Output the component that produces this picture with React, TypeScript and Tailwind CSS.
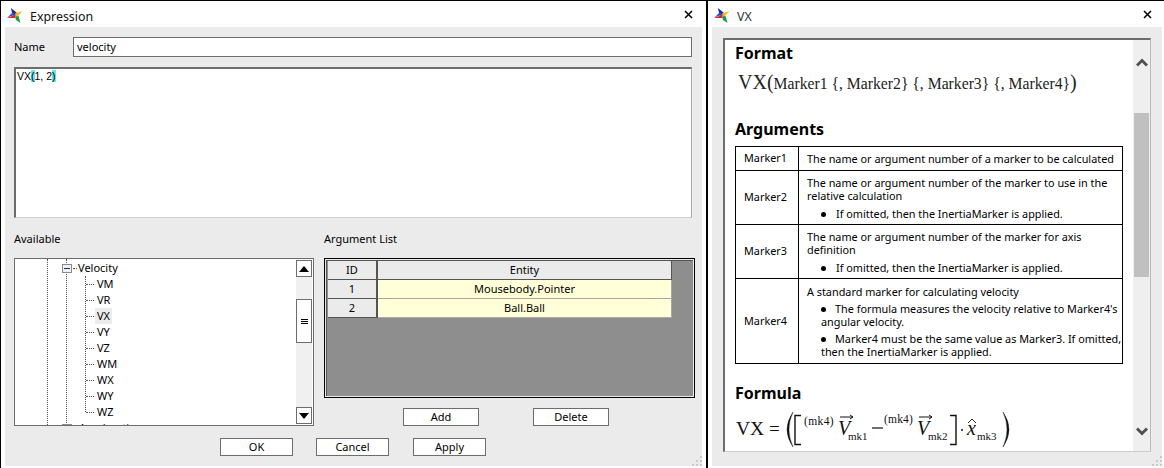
import React from "react";

const ui = "font-['Noto_Sans',sans-serif] text-[11px] text-black";

function Logo() {
  return (
    <svg width="16" height="16" viewBox="0 0 16 16" className="shrink-0 mt-[3px]">
      <polygon points="4,0 10,5 7,8 5,5" fill="#1a2590" />
      <polygon points="0,10 6,4 9,7 4,8" fill="#1f4fd0" />
      <polygon points="0,10 9,6.5 8,10" fill="#e0202a" />
      <polygon points="15.5,3 8,5.5 9.5,9.5" fill="#f5b81e" />
      <polygon points="8,8.5 11.5,8 13.5,15 9,12" fill="#1f9a3c" />
    </svg>
  );
}

function Close() {
  return (
    <svg width="9" height="9" viewBox="0 0 9 9" className="shrink-0">
      <path d="M1 1 L8 8 M8 1 L1 8" stroke="#000" strokeWidth="1.5" />
    </svg>
  );
}

function Grip() {
  return (
    <svg width="12" height="12" viewBox="0 0 12 12" className="absolute right-0 bottom-0">
      <path d="M10 2h2v2h-2zM6 6h2v2H6zM10 6h2v2h-2zM2 10h2v2H2zM6 10h2v2H6zM10 10h2v2h-2z" fill="#c9c9c9" />
    </svg>
  );
}

function Btn({ label, w }: { label: string; w: string }) {
  return (
    <div className={`${w} h-[18px] bg-white border border-[#6d6d6d] flex items-center justify-center`}>{label}</div>
  );
}

function TreeTri({ up }: { up: boolean }) {
  return (
    <svg width="10" height="6" viewBox="0 0 10 6">
      <path d={up ? "M5 0 L10 6 L0 6 Z" : "M0 0 L10 0 L5 6 Z"} fill="#000" />
    </svg>
  );
}

function TitleBar({ title, color, pr }: { title: string; color: string; pr: string }) {
  return (
    <div className={`h-[26px] shrink-0 flex items-center pl-[6px] ${pr}`}>
      <Logo />
      <span className={`ml-[7px] mt-[6px] text-[12.4px] ${color}`}>{title}</span>
      <span className="flex-1" />
      <Close />
    </div>
  );
}

function Tree() {
  const items = ["VM", "VR", "VX", "VY", "VZ", "WM", "WX", "WY", "WZ"];
  return (
    <div className="relative w-[300px] h-[168px] bg-white border border-[#6d6d6d] overflow-hidden">
      <div className="absolute left-[32px] top-0 bottom-0 border-l border-dotted border-[#555]" />
      <div className="absolute left-[51px] top-0 bottom-0 border-l border-dotted border-[#555]" />
      <div className="absolute left-[70px] top-[17px] h-[136px] border-l border-dotted border-[#555]" />
      <div className="pt-px pl-[47px]">
        <div className="h-4 flex items-center">
          <div className="relative z-10 w-[10px] h-[9px] border border-[#8a8a8a] bg-[#f0f0f0] flex items-center justify-center">
            <div className="w-[6px] h-px bg-[#1c2a6c]" />
          </div>
          <div className="w-[4px] ml-px border-t border-dotted border-[#555]" />
          <span className="ml-px">Velocity</span>
        </div>
        {items.map((t) => (
          <div key={t} className="h-4 flex items-center pl-[24px]">
            <div className="w-[8px] border-t border-dotted border-[#555]" />
            <span className={`ml-px px-[2px] leading-4 ${t === "VX" ? "bg-[#ececec]" : ""}`}>{t}</span>
          </div>
        ))}
        <div className="h-4 flex items-center">
          <div className="relative z-10 w-[10px] h-[9px] border border-[#8a8a8a] bg-[#f0f0f0]" />
          <span className="ml-[7px]">Acceleration</span>
        </div>
      </div>
      <div className="absolute right-[1px] top-[1px] bottom-[1px] w-[16px] bg-[#f0f0f0] flex flex-col justify-between">
        <div className="absolute left-0 right-0 top-[39px] h-[44px] bg-white border border-[#6d6d6d] flex flex-col items-center justify-center gap-px">
          <div className="w-[7px] h-px bg-black" />
          <div className="w-[7px] h-px bg-black" />
          <div className="w-[7px] h-px bg-black" />
        </div>
        <div className="h-[17px] bg-white border border-[#6d6d6d] flex items-center justify-center"><TreeTri up /></div>
        <div className="h-[17px] bg-white border border-[#6d6d6d] flex items-center justify-center"><TreeTri up={false} /></div>
      </div>
    </div>
  );
}

function ArgTable() {
  const rows = [["1", "Mousebody.Pointer"], ["2", "Ball.Ball"]];
  return (
    <div className="w-[371px] h-[140px] border border-black bg-[#ebebeb] p-px">
      <div className="w-full h-full bg-[#8e8e8e] border-l border-t border-[#555] pl-px">
        <div className="flex h-[19px] w-[344px]">
          <div className="w-[50px] bg-[#ebebeb] border-r-2 border-b border-[#555] flex items-center justify-center">ID</div>
          <div className="flex-1 bg-[#ebebeb] border-r border-b border-[#555] flex items-center justify-center">Entity</div>
        </div>
        {rows.map(([id, e]) => (
          <div key={id} className="flex h-[19px] w-[344px]">
            <div className="w-[50px] bg-[#ebebeb] border-r-2 border-b border-[#555] flex items-center justify-center">{id}</div>
            <div className="flex-1 bg-[#ffffd8] border-r border-b border-[#a8a8a8] flex items-center justify-center">{e}</div>
          </div>
        ))}
      </div>
    </div>
  );
}

function Expression() {
  return (
    <div className={`w-[706px] shrink-0 flex flex-col border-l border-black ${ui}`}>
      <TitleBar title="Expression" color="text-[#111]" pr="pr-[13px]" />
      <div className="relative ml-[4px] mr-[4px] flex-1 mb-[2px] bg-[#ebebeb] pl-[9px] pt-[10px]">
        <div className="flex items-center h-[20px]">
          <span className="w-[59px]">Name</span>
          <div className="w-[619px] h-[20px] bg-white border border-[#6d6d6d] pl-[3px] flex items-center">velocity</div>
        </div>
        <div className="mt-[10px] w-[678px] h-[151px] bg-white border border-t-2 border-l-2 border-[#6d6d6d] border-r-[#aaa] border-b-[#ccc] pl-px leading-[15px] font-['Liberation_Sans',sans-serif] text-[10.5px]">
          VX<span className="bg-[#5fe8e8]">(</span>1, 2<span className="bg-[#5fe8e8]">)</span>
        </div>
        <div className="mt-[13px] flex">
          <div className="w-[310px]">
            <div className="h-[16px] leading-4 mb-[11px]">Available</div>
            <Tree />
          </div>
          <div>
            <div className="h-[16px] leading-4 mb-[11px]">Argument List</div>
            <ArgTable />
            <div className="mt-[10px] flex pl-[79px] gap-[54px]">
              <Btn label="Add" w="w-[76px]" />
              <Btn label="Delete" w="w-[76px]" />
            </div>
          </div>
        </div>
        <div className="mt-[12px] flex pl-[206px]">
          <Btn label="OK" w="w-[73px]" />
          <div className="w-[23px]" />
          <Btn label="Cancel" w="w-[73px]" />
          <div className="w-[24px]" />
          <Btn label="Apply" w="w-[73px]" />
        </div>
        <Grip />
      </div>
    </div>
  );
}

function Heading({ children, className }: { children: React.ReactNode; className?: string }) {
  return <div className={`font-bold text-[16px] leading-[22px] text-black ${className ?? ""}`}>{children}</div>;
}

function Dot() {
  return <span className="inline-block w-[5px] h-[5px] rounded-full bg-black align-[1px]" />;
}

function Row({ name, h, children }: { name: string; h: string; children: React.ReactNode }) {
  return (
    <div className={`flex ${h} border-b border-black last:border-b-0`}>
      <div className="w-[63px] shrink-0 border-r border-black pl-[8px] flex items-center">{name}</div>
      <div className="flex-1 pl-[8px] pr-[1px] flex flex-col justify-center leading-[13px]">{children}</div>
    </div>
  );
}

function Formula() {
  return (
    <svg width="290" height="42" viewBox="0 0 290 42" className="block font-['Liberation_Serif',serif]">
      <text x="1" y="25" fontSize="19.5" fill="#111">VX</text>
      <text x="34" y="25" fontSize="19" fill="#111">=</text>
      <path d="M58 2 Q46 19.5 58 37 Q50 19.5 58 2" fill="#111" stroke="#111" strokeWidth="0.4" />
      <path d="M66 5.5 H60 V34.5 H66" fill="none" stroke="#111" strokeWidth="1.4" />
      <text x="69" y="15" fontSize="11.5" letterSpacing="0.4" fill="#111">(mk4)</text>
      <text x="103" y="25" fontSize="20" fontStyle="italic" fill="#111">V</text>
      <path d="M105 7 H118 M115 5 L118 7 L115 9" fill="none" stroke="#111" strokeWidth="1" />
      <text x="113" y="30" fontSize="11" fill="#111">mk1</text>
      <path d="M137 18 H148" stroke="#111" strokeWidth="1.2" />
      <text x="149" y="13" fontSize="11.5" letterSpacing="0.2" fill="#111">(mk4)</text>
      <text x="182" y="25" fontSize="20" fontStyle="italic" fill="#111">V</text>
      <path d="M184 7 H197 M194 5 L197 7 L194 9" fill="none" stroke="#111" strokeWidth="1" />
      <text x="193" y="30" fontSize="11" fill="#111">mk2</text>
      <path d="M215 5.5 H221 V34.5 H215" fill="none" stroke="#111" strokeWidth="1.4" />
      <circle cx="227" cy="20" r="1" fill="#111" />
      <text x="232" y="25" fontSize="20" fontStyle="italic" fill="#111">x</text>
      <path d="M233 13 L237 9 L241 13" fill="none" stroke="#111" strokeWidth="0.9" />
      <text x="242" y="30" fontSize="11" fill="#111">mk3</text>
      <path d="M268 2 Q280 19.5 268 37 Q276 19.5 268 2" fill="#111" stroke="#111" strokeWidth="0.4" />
    </svg>
  );
}

function Chevron({ up }: { up: boolean }) {
  return (
    <svg width="12" height="9" viewBox="0 0 12 9">
      <path d={up ? "M1 7.5 L6 2.5 L11 7.5" : "M1 1.5 L6 6.5 L11 1.5"} fill="none" stroke="#505050" strokeWidth="2.8" />
    </svg>
  );
}

function Help() {
  return (
    <div className={`flex-1 flex flex-col ${ui}`}>
      <TitleBar title="VX" color="text-[#333]" pr="pr-[12px]" />
      <div className="relative ml-[4px] mr-[2px] flex-1 mb-[2px] bg-[#ebebeb] pl-[11px] pr-[11px] pt-[11px]">
        <div className="relative h-[414px] bg-white border-t-2 border-l-2 border-r border-b border-[#6d6d6d] border-r-[#bbb] border-b-[#ccc] overflow-hidden pl-[10px]">
          <Heading className="mt-[2px]">Format</Heading>
          <div className="font-['Liberation_Serif',serif] text-[#222] text-[15.7px] leading-[24px] mt-[6px] ml-[3px] whitespace-nowrap">
            <span className="text-[20px]">VX(</span>Marker1 {"{"}, Marker2{"}"} {"{"}, Marker3{"}"} {"{"}, Marker4{"}"}<span className="text-[20px]">)</span>
          </div>
          <Heading className="mt-[22px]">Arguments</Heading>
          <div className="mt-[6px] w-[388px] border border-black text-[10.85px]">
            <Row name="Marker1" h="h-[24px]">
              <div>The name or argument number of a marker to be calculated</div>
            </Row>
            <Row name="Marker2" h="h-[54px]">
              <div>The name or argument number of the marker to use in the relative calculation</div>
              <div className="mt-[5px] pl-[14px]"><Dot /><span className="ml-[10px]">If omitted, then the InertiaMarker is applied.</span></div>
            </Row>
            <Row name="Marker3" h="h-[54px]">
              <div>The name or argument number of the marker for axis definition</div>
              <div className="mt-[5px] pl-[14px]"><Dot /><span className="ml-[10px]">If omitted, then the InertiaMarker is applied.</span></div>
            </Row>
            <Row name="Marker4" h="h-[84px]">
              <div>A standard marker for calculating velocity</div>
              <div className="mt-[4px] pl-[14px] whitespace-nowrap"><Dot /><span className="ml-[9px]">The formula measures the velocity relative to Marker4's</span><br />angular velocity.</div>
              <div className="mt-[4px] pl-[14px] whitespace-nowrap"><Dot /><span className="ml-[9px]">Marker4 must be the same value as Marker3. If omitted,</span><br />then the InertiaMarker is applied.</div>
            </Row>
          </div>
          <Heading className="mt-[18px]">Formula</Heading>
          <div className="mt-[6px]"><Formula /></div>
          <div className="absolute right-0 top-0 bottom-0 w-[17px] bg-[#efefef] flex flex-col items-center justify-between pt-[18px] pb-[15px]">
            <div className="absolute left-px right-px top-[73px] h-[164px] bg-[#c0c0c0]" />
            <Chevron up />
            <Chevron up={false} />
          </div>
        </div>
        <Grip />
      </div>
    </div>
  );
}

export default function App() {
  return (
    <div className="w-[1164px] h-[468px] bg-white border-t border-black flex overflow-hidden">
      <Expression />
      <div className="w-[2px] shrink-0 bg-black" />
      <Help />
    </div>
  );
}
